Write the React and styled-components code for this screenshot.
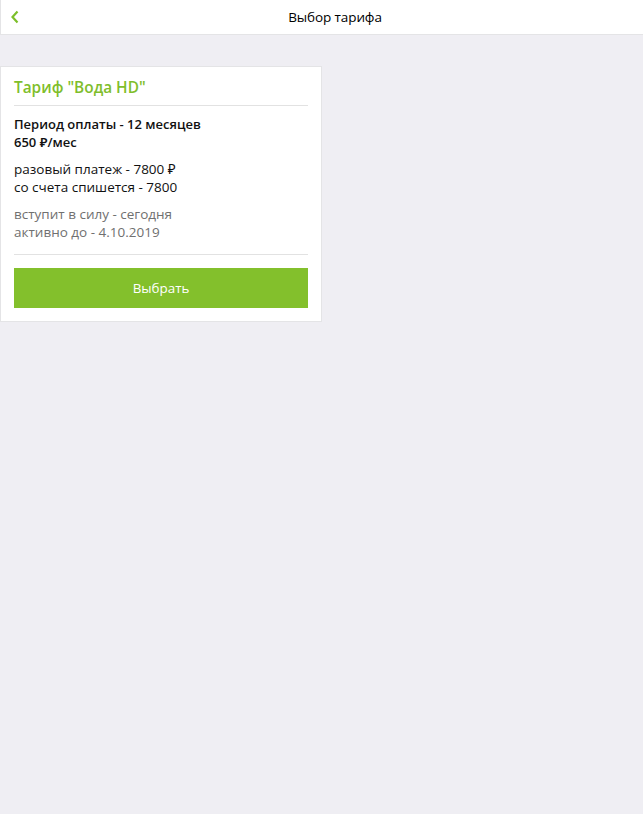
import React from 'react'
import styled, { createGlobalStyle } from 'styled-components'

const GlobalStyle = createGlobalStyle`
  html, body {
    margin: 0;
    padding: 0;
    background: #efeef3;
    font-family: 'Open Sans', 'Noto Sans', sans-serif;
    color: #111;
  }
  * { box-sizing: border-box; }
`

const Page = styled.div`
  min-height: 814px;
  background: #efeef3;
`

const TopBar = styled.header`
  display: flex;
  align-items: center;
  height: 35px;
  padding: 0 9px;
  background: #fff;
  border-left: 1px solid #e4e4e6;
  border-bottom: 1px solid #e4e4e6;
`

const BackButton = styled.button`
  appearance: none;
  border: none;
  background: transparent;
  padding: 0;
  margin: 0;
  width: 30px;
  height: 24px;
  display: flex;
  align-items: center;
  cursor: pointer;
`

const TopTitle = styled.h1`
  flex: 1;
  margin: 0;
  padding-right: 4px;
  text-align: center;
  font-size: 13.5px;
  font-weight: 400;
  letter-spacing: -0.1px;
  color: #000;
`

const Content = styled.main`
  padding-top: 31px;
`

const Card = styled.section`
  width: 322px;
  padding: 0 13px 13px;
  background: #fff;
  border: 1px solid #e4e4e6;
`

const CardTitle = styled.h2`
  margin: 0;
  padding: 11px 0 8px;
  font-size: 15.4px;
  line-height: 19px;
  font-weight: 600;
  color: #7fbe2c;
  border-bottom: 1px solid #e2e2e2;
`

const Block = styled.div`
  padding-top: ${(p) => p.$top || 9}px;
  font-size: ${(p) => (p.$strong ? 13 : 13.5)}px;
  line-height: 18px;
  font-weight: ${(p) => (p.$strong ? 600 : 400)};
  color: ${(p) => p.$color || '#111'};
`

const Footer = styled.div`
  margin-top: 13px;
  padding-top: 13px;
  border-top: 1px solid #e2e2e2;
`

const SelectButton = styled.button`
  appearance: none;
  border: none;
  width: 100%;
  height: 40px;
  margin: 0;
  background: #83c02c;
  color: #fff;
  font-family: inherit;
  font-size: 13.4px;
  cursor: pointer;
`

function ChevronLeft() {
  return (
    <svg width="10" height="14" viewBox="0 0 10 14" fill="none">
      <path d="M7.5 1.5L2.5 7l5 5.5" stroke="#7cbf2a" strokeWidth="2.2" />
    </svg>
  )
}

export default function App() {
  return (
    <Page>
      <GlobalStyle />
      <TopBar>
        <BackButton type="button" aria-label="Назад">
          <ChevronLeft />
        </BackButton>
        <TopTitle>Выбор тарифа</TopTitle>
      </TopBar>
      <Content>
        <Card>
          <CardTitle>Тариф "Вода HD"</CardTitle>
          <Block $strong $top={9}>
            Период оплаты - 12 месяцев
            <br />
            650 ₽/мес
          </Block>
          <Block>
            разовый платеж - 7800 ₽
            <br />
            со счета спишется - 7800
          </Block>
          <Block $color="#707070">
            вступит в силу - сегодня
            <br />
            активно до - 4.10.2019
          </Block>
          <Footer>
            <SelectButton type="button">Выбрать</SelectButton>
          </Footer>
        </Card>
      </Content>
    </Page>
  )
}
